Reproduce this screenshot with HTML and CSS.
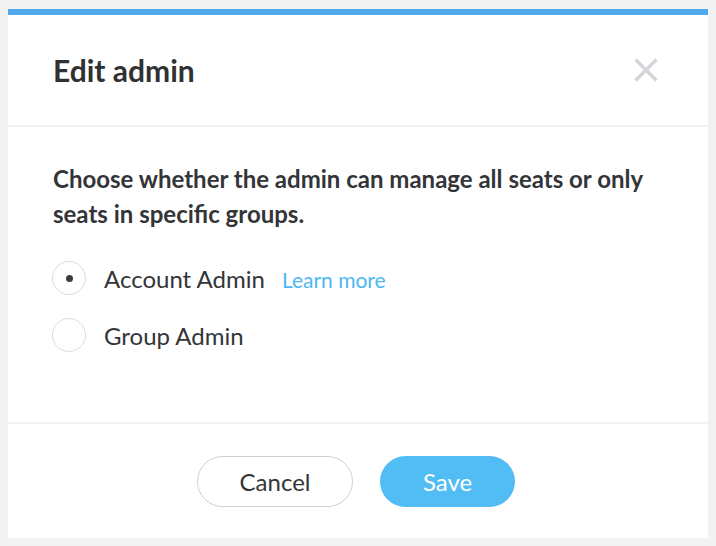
FILE: index.html
```html
<!DOCTYPE html>
<html>
<head>
<meta charset="utf-8">
<link rel="stylesheet" href="styles.css">
</head>
<body>
<div class="dialog">
  <div class="header">
    <h1 class="title">Edit admin</h1>
    <button class="close" aria-label="Close">
      <svg width="24" height="24" viewBox="0 0 24 24"><path d="M1.5 1.5 L22.5 22.5 M22.5 1.5 L1.5 22.5" stroke="#d3d6d9" stroke-width="3.2" fill="none"/></svg>
    </button>
  </div>
  <div class="body">
    <p class="lead">Choose whether the admin can manage all seats or only seats in specific groups.</p>
    <div class="options">
      <label class="option">
        <span class="radio checked"><span class="dot"></span></span>
        <span class="label">Account Admin</span>
        <a class="learn" href="#">Learn more</a>
      </label>
      <label class="option">
        <span class="radio"></span>
        <span class="label">Group Admin</span>
      </label>
    </div>
  </div>
  <div class="footer">
    <button class="btn cancel">Cancel</button>
    <button class="btn save">Save</button>
  </div>
</div>
</body>
</html>
```

FILE: styles.css
```css
html, body {
  margin: 0;
  background: #f2f2f2;
}
body {
  padding: 9px 8px 8px;
  font-family: Lato, "Open Sans", sans-serif;
  color: #333;
}
.dialog {
  background: #fff;
  border-top: 6px solid #4fa9ec;
  height: 523px;
  display: flex;
  flex-direction: column;
}
.header {
  height: 110px;
  border-bottom: 2px solid #f2f2f2;
  display: flex;
  align-items: center;
  justify-content: space-between;
  padding: 0 50px 0 45px;
}
.title {
  margin: 0;
  font-size: 30px;
  font-weight: 700;
  color: #2f3133;
}
.close {
  border: 0;
  background: none;
  padding: 0;
  width: 24px;
  height: 24px;
  display: flex;
}
.body {
  flex: 1;
  padding: 34px 45px 0;
  border-bottom: 2px solid #f2f2f2;
}
.lead {
  margin: 0;
  font-size: 24px;
  font-weight: 700;
  line-height: 35px;
  color: #333538;
}
.options {
  margin-top: 30px;
  display: flex;
  flex-direction: column;
  gap: 23px;
}
.option {
  display: flex;
  align-items: center;
  height: 34px;
}
.radio {
  width: 32px;
  height: 32px;
  border: 1px solid #dcdcdc;
  border-radius: 50%;
  display: flex;
  align-items: center;
  justify-content: center;
  margin-left: -1px;
  margin-right: 18px;
}
.dot {
  width: 7px;
  height: 7px;
  border-radius: 50%;
  background: #3a3c3f;
}
.label {
  font-size: 24px;
  color: #333538;
}
.learn {
  margin-left: 17px;
  font-size: 21px;
  color: #4db8f2;
  text-decoration: none;
  padding-top: 2px;
}
.footer {
  height: 114px;
  display: flex;
  align-items: center;
  justify-content: center;
  gap: 27px;
  padding-right: 4px;
}
.btn {
  height: 51px;
  border-radius: 26px;
  font-family: Lato, "Open Sans", sans-serif;
  font-size: 24px;
  cursor: pointer;
}
.cancel {
  width: 156px;
  background: #fff;
  border: 1px solid #cfcfcf;
  color: #333538;
}
.save {
  width: 135px;
  background: #52bdf4;
  border: 0;
  color: #fff;
}
```
